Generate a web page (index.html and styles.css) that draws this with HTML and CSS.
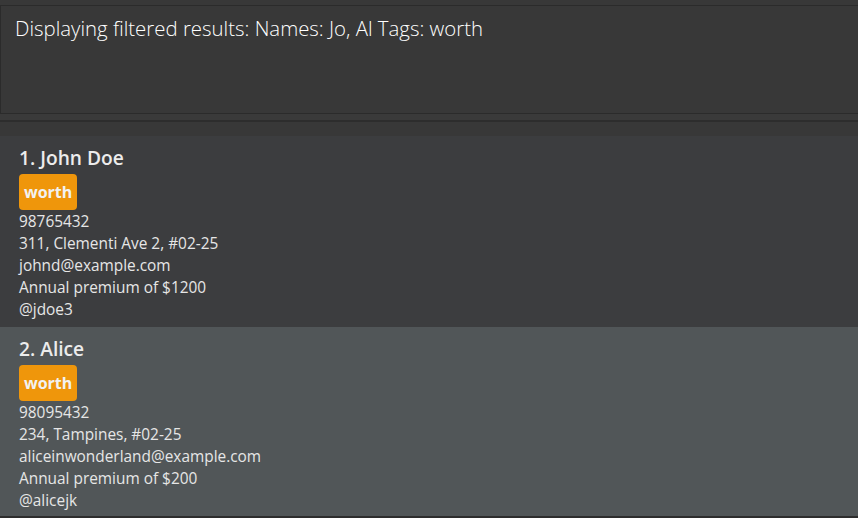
FILE: index.html
```html
<!DOCTYPE html>
<html>
<head>
<meta charset="utf-8">
<link rel="stylesheet" href="styles.css">
</head>
<body>
<div class="app">
  <div class="result-box">
    <div class="result-text">Displaying filtered results: Names: Jo, Al Tags: worth</div>
  </div>
  <div class="divider"></div>
  <div class="list">
    <div class="card card-odd">
      <div class="name">1. John Doe</div>
      <div class="tags"><span class="tag">worth</span></div>
      <div class="field">98765432</div>
      <div class="field">311, Clementi Ave 2, #02-25</div>
      <div class="field">johnd@example.com</div>
      <div class="field">Annual premium of $1200</div>
      <div class="field">@jdoe3</div>
    </div>
    <div class="card card-even">
      <div class="name">2. Alice</div>
      <div class="tags"><span class="tag">worth</span></div>
      <div class="field">98095432</div>
      <div class="field">234, Tampines, #02-25</div>
      <div class="field">aliceinwonderland@example.com</div>
      <div class="field">Annual premium of $200</div>
      <div class="field">@alicejk</div>
    </div>
  </div>
</div>
</body>
</html>
```

FILE: styles.css
```css
html, body {
  margin: 0;
  padding: 0;
  background: #383838;
  overflow: hidden;
}
.app {
  width: 858px;
  height: 518px;
  padding-top: 5px;
  box-sizing: border-box;
  display: flex;
  flex-direction: column;
  font-family: "Open Sans", "Noto Sans", sans-serif;
}
.result-box {
  height: 109px;
  box-sizing: border-box;
  border: 1px solid #2b2b2b;
  border-right: none;
  background: #383838;
  padding: 9px 14px;
}
.result-text {
  color: #ffffff;
  font-size: 20.4px;
  font-weight: 300;
  line-height: 26px;
}
.divider {
  height: 6px;
  border-bottom: 2px solid #2d2d2d;
  background: #3a3a3a;
}
.list {
  flex: 1;
  padding-top: 14px;
  background: #383838;
  display: flex;
  flex-direction: column;
  border-bottom: 2px solid #2d2d2d;
}
.card {
  padding: 8px 19px 0;
  display: flex;
  flex-direction: column;
  align-items: flex-start;
}
.card-odd {
  background: #3c3d3f;
  height: 191px;
  box-sizing: border-box;
}
.card-even {
  background: #515658;
  flex: 1;
}
.name {
  color: #ececec;
  font-size: 19.2px;
  font-weight: 600;
  line-height: 28px;
}
.tags {
  display: flex;
  margin: 2px 0 0;
}
.tag {
  background: #ef960b;
  color: #f2f2f2;
  font-size: 16px;
  font-weight: 700;
  line-height: 24px;
  padding: 6px 5px;
  border-radius: 4px;
}
.field {
  color: #e6e6e6;
  font-size: 15.4px;
  line-height: 22px;
}
.tags + .field {
  margin-top: 1px;
}
```
